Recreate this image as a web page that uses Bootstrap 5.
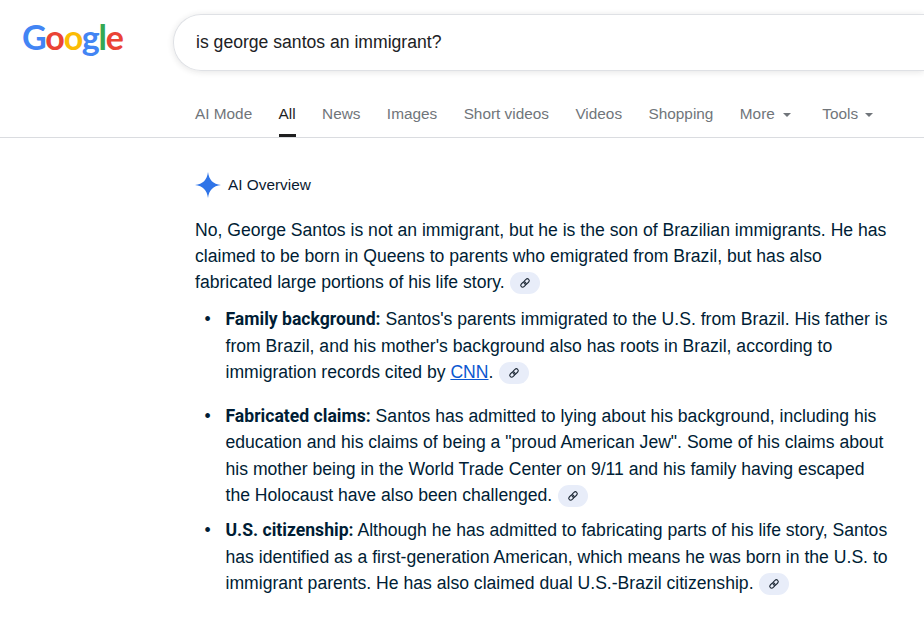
<!DOCTYPE html>
<html lang="en">
<head>
<meta charset="utf-8">
<title>is george santos an immigrant?</title>
<link href="https://cdn.jsdelivr.net/npm/bootstrap@5.3.0/dist/css/bootstrap.min.css" rel="stylesheet">
<style>
html,body{height:620px;overflow:hidden;background:#fff;font-family:"Liberation Sans",Arial,sans-serif}
.top-head{height:90px;padding-top:14px}
.g-logo{width:173px;padding-left:22px;font-family:Lato,"Liberation Sans",sans-serif;font-weight:700;font-size:34px;line-height:46px;letter-spacing:-1.2px;height:56px}
.g-b{color:#4285f4}.g-r{color:#ea4335}.g-y{color:#fbbc05}.g-g{color:#34a853}
.search-pill{flex:1;height:57px;border:1px solid #dfe1e5;border-right:0;border-radius:28px 0 0 28px;box-shadow:0 1px 6px rgba(32,33,36,.12);padding-left:22px;font-size:17.6px;color:#202124}
.tab-row{height:48px;padding-left:195px;gap:26.4px;border-bottom:1px solid #dadce0;font-size:15.36px;color:#70757a}
.tab-item{height:47px;line-height:47px;position:relative;white-space:nowrap}
.tab-on{color:#1f1f1f}
.tab-on::after{content:"";position:absolute;left:0;right:0;bottom:0;height:3px;background:#1f1f1f}
.tab-tools{margin-left:4.6px}
.caret-d{display:inline-block;margin-left:8.5px;vertical-align:middle;border-left:4px solid transparent;border-right:4px solid transparent;border-top:4px solid #70757a}
.tab-tools .caret-d{margin-left:6.5px}
.ai-body{padding:0 0 0 195px;width:893px;color:#001d35;font-size:17.6px;line-height:26.4px}
.ai-title{height:34px;margin-top:30px;gap:7px;font-size:15.36px;color:#0a1a2f;line-height:34px;margin-bottom:14.5px}
.ai-para{margin-bottom:10.5px}
.ai-list{margin:0;padding-left:30.5px;list-style:none}
.ai-list li::before{content:"•";display:inline-block;width:21px;margin-left:-21px;font-size:17.6px}
.gap-lg{margin-bottom:17.6px}
.gap-sm{margin-bottom:8.8px}
.ai-list b{font-family:Roboto,"Liberation Sans",sans-serif;font-weight:700;color:#001d35}
.ai-link{color:#0b57d0;text-decoration:underline}
.cite-chip{display:inline-flex;align-items:center;justify-content:center;width:30px;height:22px;margin-left:1px;border-radius:11px;background:#e8edf9;vertical-align:-1px}
.ai-para .cite-chip{margin-left:0}
</style>
</head>
<body>
<header class="top-head d-flex align-items-start">
  <div class="g-logo"><span class="g-b">G</span><span class="g-r">o</span><span class="g-y">o</span><span class="g-b">g</span><span class="g-g">l</span><span class="g-r">e</span></div>
  <div class="search-pill d-flex align-items-center">is george santos an immigrant?</div>
</header>
<nav class="tab-row d-flex">
  <div class="tab-item">AI Mode</div>
  <div class="tab-item tab-on">All</div>
  <div class="tab-item">News</div>
  <div class="tab-item">Images</div>
  <div class="tab-item">Short videos</div>
  <div class="tab-item">Videos</div>
  <div class="tab-item">Shopping</div>
  <div class="tab-item">More<span class="caret-d"></span></div>
  <div class="tab-item tab-tools">Tools<span class="caret-d"></span></div>
</nav>
<main class="ai-body">
  <div class="ai-title d-flex align-items-center">
    <svg width="26" height="26" viewBox="0 0 26 26" aria-hidden="true"><path d="M13 0C14 8 18 12 26 13C18 14 14 18 13 26C12 18 8 14 0 13C8 12 12 8 13 0Z" fill="#2f74e8"/></svg>
    <span>AI Overview</span>
  </div>
  <p class="ai-para">No, George Santos is not an immigrant, but he is the son of Brazilian immigrants. He has claimed to be born in Queens to parents who emigrated from Brazil, but has also fabricated large portions of his life story. <span class="cite-chip"><svg width="12" height="12" viewBox="0 0 12 12" fill="none" stroke="#1f2a37" stroke-width="1.1"><g transform="rotate(-45 6 6)"><rect x=".8" y="4.1" width="6" height="3.8" rx="1.9"/><rect x="5.2" y="4.1" width="6" height="3.8" rx="1.9"/></g></svg></span></p>
  <ul class="ai-list">
    <li class="gap-lg"><b>Family background:</b> Santos's parents immigrated to the U.S. from Brazil. His father is from Brazil, and his mother's background also has roots in Brazil, according to immigration records cited by <span class="ai-link">CNN</span>. <span class="cite-chip"><svg width="12" height="12" viewBox="0 0 12 12" fill="none" stroke="#1f2a37" stroke-width="1.1"><g transform="rotate(-45 6 6)"><rect x=".8" y="4.1" width="6" height="3.8" rx="1.9"/><rect x="5.2" y="4.1" width="6" height="3.8" rx="1.9"/></g></svg></span></li>
    <li class="gap-sm"><b>Fabricated claims:</b> Santos has admitted to lying about his background, including his education and his claims of being a "proud American Jew". Some of his claims about his mother being in the World Trade Center on 9/11 and his family having escaped the Holocaust have also been challenged. <span class="cite-chip"><svg width="12" height="12" viewBox="0 0 12 12" fill="none" stroke="#1f2a37" stroke-width="1.1"><g transform="rotate(-45 6 6)"><rect x=".8" y="4.1" width="6" height="3.8" rx="1.9"/><rect x="5.2" y="4.1" width="6" height="3.8" rx="1.9"/></g></svg></span></li>
    <li><b>U.S. citizenship:</b> Although he has admitted to fabricating parts of his life story, Santos has identified as a first-generation American, which means he was born in the U.S. to immigrant parents. He has also claimed dual U.S.-Brazil citizenship. <span class="cite-chip"><svg width="12" height="12" viewBox="0 0 12 12" fill="none" stroke="#1f2a37" stroke-width="1.1"><g transform="rotate(-45 6 6)"><rect x=".8" y="4.1" width="6" height="3.8" rx="1.9"/><rect x="5.2" y="4.1" width="6" height="3.8" rx="1.9"/></g></svg></span></li>
  </ul>
</main>
</body>
</html>
